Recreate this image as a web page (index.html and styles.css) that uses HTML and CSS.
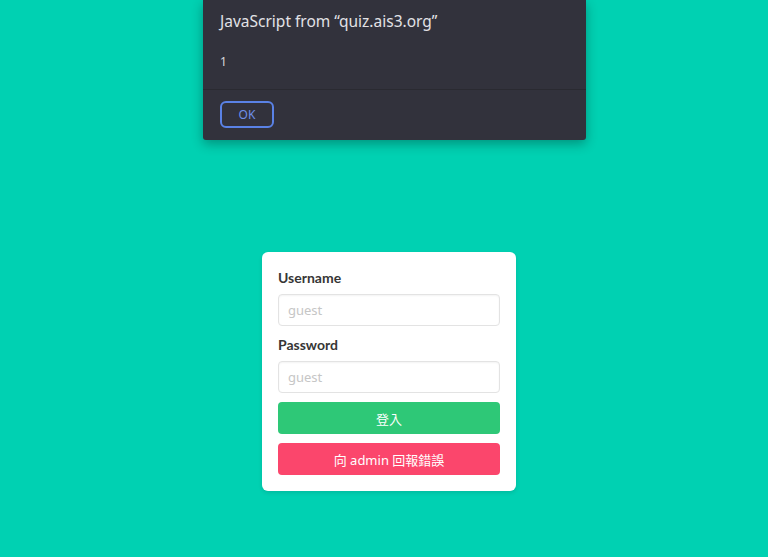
FILE: index.html
```
<!DOCTYPE html>
<html lang="zh-Hant">
<head>
    <meta charset="UTF-8">
    <meta name="viewport" content="width=device-width, initial-scale=1.0">
    <title>Login</title>
    <link rel="stylesheet" href="styles.css">
</head>
<body>
<div class="page">
    <form class="box">
        <label class="label" for="username">Username</label>
        <input class="input" type="text" id="username" placeholder="guest">
        <label class="label" for="password">Password</label>
        <input class="input" type="password" id="password" placeholder="guest">
        <button type="button" class="button is-success">登入</button>
        <button type="button" class="button is-danger">向 admin 回報錯誤</button>
    </form>
</div>

<div class="alert">
    <div class="alert-body">
        <div class="alert-title">JavaScript from “quiz.ais3.org”</div>
        <div class="alert-message">1</div>
    </div>
    <div class="alert-footer">
        <button type="button" class="alert-ok">OK</button>
    </div>
</div>
</body>
</html>
```

FILE: styles.css
```
body {
    margin: 0;
    padding: 0;
    height: 557px;
    background-color: #00d1b2;
    font-family: "Noto Sans", "Noto Sans CJK TC", sans-serif;
    color: #363636;
}

.page {
    display: flex;
    justify-content: center;
    padding: 252px 0 0 10px;
}

.box {
    display: flex;
    flex-direction: column;
    width: 254px;
    box-sizing: border-box;
    padding: 16px;
    background-color: #fff;
    border-radius: 6px;
    box-shadow: 0 2px 4px rgba(10, 10, 10, 0.1);
}

.label {
    display: block;
    font-family: Lato, "Noto Sans", sans-serif;
    font-size: 14px;
    font-weight: bold;
    line-height: 20px;
    margin-bottom: 6px;
    color: #363636;
}

.input {
    height: 32px;
    box-sizing: border-box;
    border: 1px solid #e3e3e3;
    border-radius: 4px;
    padding: 0 9px;
    margin: 0 0 9px;
    font-family: inherit;
    font-size: 13px;
    color: #363636;
    box-shadow: inset 0 1px 2px rgba(10, 10, 10, 0.05);
}

.input::placeholder {
    color: #c6c6c6;
}

.button {
    height: 32px;
    border: none;
    border-radius: 4px;
    margin: 0 0 9px;
    padding: 0;
    font-family: inherit;
    font-size: 13px;
    color: #fff;
    cursor: pointer;
}

.button:last-child {
    margin-bottom: 0;
}

.is-success {
    background-color: #2ec877;
}

.is-danger {
    background-color: #fb466c;
}

.alert {
    position: absolute;
    top: 0;
    left: 203px;
    width: 383px;
    background-color: #32323c;
    border-radius: 0 0 3px 3px;
    box-shadow: 0 4px 12px rgba(0, 0, 0, 0.3);
    color: #e2e2e6;
}

.alert-body {
    padding: 10px 17px 17px;
    border-bottom: 1px solid #2a2a31;
}

.alert-title {
    font-size: 15.5px;
    line-height: 22px;
}

.alert-message {
    margin-top: 20px;
    font-size: 12px;
    line-height: 20px;
    color: #d8d8dc;
}

.alert-footer {
    padding: 11px 17px 12px;
}

.alert-ok {
    width: 54px;
    height: 27px;
    background: transparent;
    border: 2px solid #5a82e6;
    border-radius: 6px;
    font-family: inherit;
    font-size: 12px;
    color: #6f90e8;
    cursor: pointer;
}
```
